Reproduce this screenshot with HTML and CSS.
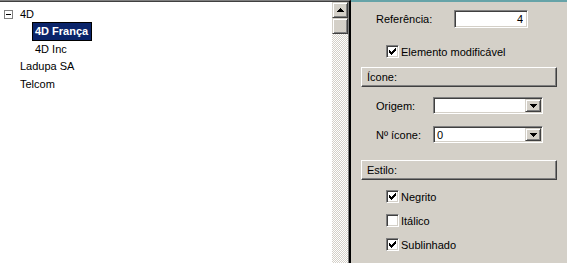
FILE: index.html
```html
<!DOCTYPE html>
<html lang="pt">
<head>
    <meta charset="UTF-8">
    <meta name="viewport" content="width=device-width, initial-scale=1.0">
    <title>Propriedades da lista</title>
    <link rel="stylesheet" href="styles.css">
</head>
<body>
    <div class="window">
        <div class="tree-pane">
            <div class="tree-inner">
                <div class="tree">
                    <div class="node root">
                        <span class="toggle"></span>
                        <span class="label">4D</span>
                    </div>
                    <div class="node child">
                        <span class="label selected">4D França</span>
                    </div>
                    <div class="node child">
                        <span class="label">4D Inc</span>
                    </div>
                    <div class="node root leaf">
                        <span class="label">Ladupa SA</span>
                    </div>
                    <div class="node root leaf">
                        <span class="label">Telcom</span>
                    </div>
                </div>
                <div class="scrollbar">
                    <div class="sb-btn">
                        <svg width="7" height="4" viewBox="0 0 7 4"><path d="M3 0h1v1h1v1h1v1h1v1H0V3h1V2h1V1h1z" fill="#000"/></svg>
                    </div>
                    <div class="sb-thumb"></div>
                    <div class="sb-track"></div>
                </div>
            </div>
        </div>

        <div class="props">
            <div class="field-row">
                <span class="field-label ref">Referência:</span>
                <input class="field num" type="text" value="4">
            </div>

            <div class="check-row first">
                <span class="check">
                    <svg width="7" height="7" viewBox="0 0 7 7"><path d="M0 2h1v1h1v1h1V3h1V2h1V1h1V0h1v3H6v1H5v1H4v1H3v1H2V6H1V5H0z" fill="#000"/></svg>
                </span>
                <span>Elemento modificável</span>
            </div>

            <div class="section">Ícone:</div>

            <div class="field-row combo-row">
                <span class="field-label">Origem:</span>
                <div class="combo">
                    <span class="combo-value"></span>
                    <span class="combo-btn">
                        <svg width="7" height="4" viewBox="0 0 7 4"><path d="M0 0h7v1H6v1H5v1H4v1H3V3H2V2H1V1H0z" fill="#000"/></svg>
                    </span>
                </div>
            </div>

            <div class="field-row combo-row second">
                <span class="field-label">Nº ícone:</span>
                <div class="combo">
                    <span class="combo-value">0</span>
                    <span class="combo-btn">
                        <svg width="7" height="4" viewBox="0 0 7 4"><path d="M0 0h7v1H6v1H5v1H4v1H3V3H2V2H1V1H0z" fill="#000"/></svg>
                    </span>
                </div>
            </div>

            <div class="section style">Estilo:</div>

            <div class="check-row style-first">
                <span class="check">
                    <svg width="7" height="7" viewBox="0 0 7 7"><path d="M0 2h1v1h1v1h1V3h1V2h1V1h1V0h1v3H6v1H5v1H4v1H3v1H2V6H1V5H0z" fill="#000"/></svg>
                </span>
                <span>Negrito</span>
            </div>
            <div class="check-row">
                <span class="check"></span>
                <span>Itálico</span>
            </div>
            <div class="check-row">
                <span class="check">
                    <svg width="7" height="7" viewBox="0 0 7 7"><path d="M0 2h1v1h1v1h1V3h1V2h1V1h1V0h1v3H6v1H5v1H4v1H3v1H2V6H1V5H0z" fill="#000"/></svg>
                </span>
                <span>Sublinhado</span>
            </div>
        </div>
    </div>
</body>
</html>
```

FILE: styles.css
```css
html, body {
    margin: 0;
    padding: 0;
    height: 100%;
}

body {
    font-family: 'Liberation Sans', Arial, sans-serif;
    font-size: 11px;
    color: #000;
    background-color: #d4d0c8;
    overflow: hidden;
}

.window {
    display: flex;
    height: 263px;
}

/* Tree side */

.tree-pane {
    width: 351px;
    box-sizing: border-box;
    display: flex;
    flex-direction: column;
    border-top: 1px solid #808080;
    border-right: 2px solid #000;
}

.tree-inner {
    flex: 1;
    display: flex;
    border-top: 1px solid #404040;
}

.tree {
    flex: 1;
    background-color: #fff;
    padding-top: 3.5px;
}

.node {
    display: flex;
    align-items: center;
    height: 17.5px;
}

.root {
    padding-left: 4px;
}

.root.leaf {
    padding-left: 17px;
}

.child {
    padding-left: 32px;
}

.toggle {
    position: relative;
    width: 9px;
    height: 9px;
    box-sizing: border-box;
    border: 1px solid #808080;
    background-color: #fff;
    margin-right: 4px;
}

.toggle::after {
    content: "";
    position: absolute;
    left: 1px;
    top: 3px;
    width: 5px;
    height: 1px;
    background-color: #000;
}

.label {
    display: inline-block;
    border: 1px solid transparent;
    padding: 0 2px;
    height: 17px;
    line-height: 17px;
    white-space: nowrap;
}

.label.selected {
    border-color: #000;
    background-color: #0a246a;
    color: #fff;
    font-weight: bold;
    padding-right: 3px;
}

.scrollbar {
    width: 16px;
    display: flex;
    flex-direction: column;
    border-right: 1px solid #808080;
}

.sb-btn,
.sb-thumb {
    height: 16px;
    box-sizing: border-box;
    background-color: #d4d0c8;
    border-top: 1px solid #d4d0c8;
    border-left: 1px solid #d4d0c8;
    border-right: 1px solid #404040;
    border-bottom: 1px solid #404040;
    box-shadow: inset 1px 1px #fff, inset -1px -1px #808080;
}

.sb-btn {
    display: flex;
    align-items: center;
    justify-content: center;
}

.sb-track {
    flex: 1;
    background: repeating-conic-gradient(#d4d0c8 0 25%, #fff 0 50%) 0 0 / 2px 2px;
}

/* Properties side */

.props {
    flex: 1;
    border-top: 2px solid #66a3a8;
    padding: 8px 0 0 10px;
}

.field-row {
    display: flex;
    align-items: center;
    height: 18px;
    padding-left: 15px;
}

.field-label {
    width: 57px;
    white-space: nowrap;
}

.field-label.ref {
    width: 78px;
}

.field {
    width: 74px;
    height: 18px;
    box-sizing: border-box;
    margin: 0;
    padding: 0 4px;
    font-family: inherit;
    font-size: 11px;
    background-color: #fff;
    border: 1px solid;
    border-color: #808080 #fff #fff #808080;
    box-shadow: inset 1px 1px #404040, inset -1px -1px #d4d0c8;
    outline: none;
}

.field.num {
    text-align: right;
}

.check-row {
    display: flex;
    align-items: center;
    gap: 2px;
    height: 13px;
    padding-left: 25px;
    margin-top: 11px;
}

.check-row.first {
    margin-top: 17px;
}

.check-row.style-first {
    margin-top: 10px;
}

.check {
    width: 13px;
    height: 13px;
    box-sizing: border-box;
    display: flex;
    align-items: center;
    justify-content: center;
    background-color: #fff;
    border: 1px solid;
    border-color: #808080 #fff #fff #808080;
    box-shadow: inset 1px 1px #404040, inset -1px -1px #d4d0c8;
}

.section {
    width: 196px;
    height: 20px;
    box-sizing: border-box;
    margin-top: 9px;
    padding-left: 5px;
    display: flex;
    align-items: center;
    background-color: #d4d0c8;
    border-top: 1px solid #fff;
    border-left: 1px solid #fff;
    border-right: 1px solid #404040;
    border-bottom: 1px solid #404040;
    box-shadow: inset -1px -1px #808080;
}

.section.style {
    margin-top: 17px;
}

.combo-row {
    height: 17px;
    margin-top: 10px;
}

.combo-row.second {
    margin-top: 12px;
}

.combo {
    width: 110px;
    height: 17px;
    box-sizing: border-box;
    display: flex;
    align-items: center;
    background-color: #fff;
    border: 1px solid;
    border-color: #808080 #fff #fff #808080;
    box-shadow: inset 1px 1px #404040, inset -1px -1px #d4d0c8;
    padding: 1px;
}

.combo-value {
    flex: 1;
    padding-left: 2px;
}

.combo-btn {
    width: 16px;
    height: 13px;
    box-sizing: border-box;
    display: flex;
    align-items: center;
    justify-content: center;
    background-color: #d4d0c8;
    border-top: 1px solid #d4d0c8;
    border-left: 1px solid #d4d0c8;
    border-right: 1px solid #404040;
    border-bottom: 1px solid #404040;
    box-shadow: inset 1px 1px #fff, inset -1px -1px #808080;
}
```
